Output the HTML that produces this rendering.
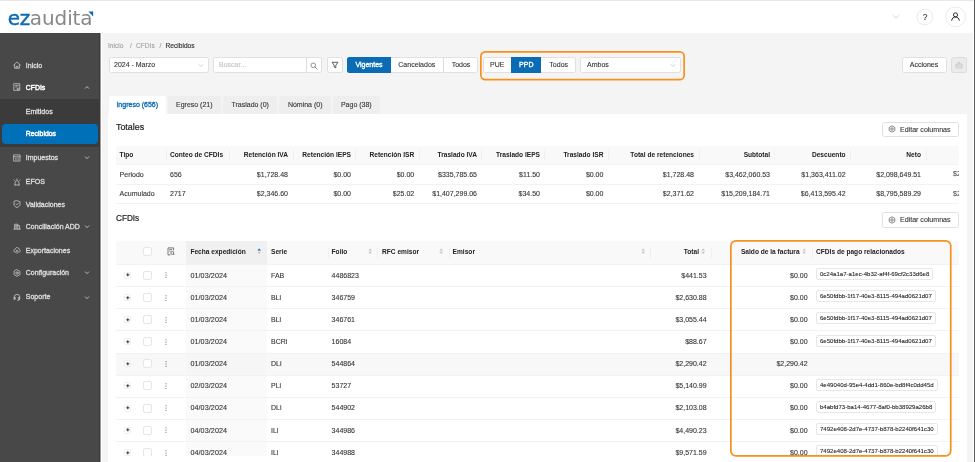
<!DOCTYPE html><html lang="es"><head><meta charset="utf-8"><title>ezaudita - CFDIs Recibidos</title><style>
*{box-sizing:border-box;margin:0;padding:0}
html,body{width:975px;height:462px;overflow:hidden;background:#fff}
body{position:relative;font-family:"Liberation Sans",sans-serif;-webkit-font-smoothing:antialiased}
div,svg{position:absolute}
.t{white-space:nowrap}
#root{left:0;top:0;width:975px;height:462px;will-change:transform}
.tag{height:12px;padding:0 3.2px 0 3.4px;border:1px solid #e7e7e7;border-radius:2px;background:#fff;font-size:6.06px;line-height:10.2px;color:#222;-webkit-text-stroke:0.08px #222}
.btn{background:#fff;border:1px solid #e0e0e0;border-radius:2.5px}
svg{overflow:visible}
</style></head><body><div id="root">
<div style="left:102px;top:33px;width:871px;height:429px;background:#f4f4f4"></div>
<div style="left:0px;top:0px;width:975px;height:1px;background:#ebe6e7"></div>
<div style="left:974px;top:0px;width:1px;height:462px;background:#5a5a5a"></div>
<div class="t" style="left:7.8px;top:5.2px;font-family:'DejaVu Sans','Liberation Sans',sans-serif;font-size:20px;line-height:26px;letter-spacing:-0.1px;color:#85878a"><span style="color:#0a6cb4;-webkit-text-stroke:0.45px #0a6cb4;letter-spacing:-0.4px">ez</span><span>audita</span></div>
<svg style="left:88px;top:11px" width="6" height="6" viewBox="0 0 6 6"><path d="M0.3 0.6 L5.2 0.6 L5.2 5.4 Z" fill="#0a6cb4"/></svg>
<svg style="left:892px;top:14px" width="8" height="6" viewBox="0 0 8 6"><path d="M1.2 1.3 L4 4.2 L6.8 1.3" fill="none" stroke="#c9c9c9" stroke-width="0.8"/></svg>
<svg style="left:915px;top:7px" width="20" height="20" viewBox="0 0 20 20"><circle cx="9.8" cy="10" r="7.9" fill="#fff" stroke="#e3e3e3" stroke-width="0.8"/></svg>
<div class="t" style="left:825px;width:200px;text-align:center;top:11.95px;font-size:8.5px;line-height:10px;color:#333;-webkit-text-stroke:0.1px #333;">?</div>
<svg style="left:943px;top:4px" width="26" height="26" viewBox="0 0 26 26"><circle cx="12.5" cy="12.8" r="9.9" fill="#fff" stroke="#e3e3e3" stroke-width="0.8"/></svg>
<svg style="left:951px;top:12px" width="9" height="9" viewBox="0 0 9 9"><circle cx="4.5" cy="2.9" r="2.05" fill="none" stroke="#222" stroke-width="0.95"/><path d="M0.7 8.3 C1 6.2 2.6 5 4.5 5 C6.4 5 8 6.2 8.3 8.3" fill="none" stroke="#222" stroke-width="0.95" stroke-linecap="round"/></svg>
<div style="left:0px;top:33px;width:100px;height:429px;background:#484848"></div>
<div style="left:99px;top:33px;width:1px;height:429px;background:#3a3a3a"></div>
<div style="left:100px;top:33px;width:1px;height:429px;background:#9a9a9a"></div>
<div style="left:0px;top:99px;width:99px;height:47.5px;background:#3b3b3b"></div>
<div style="left:2px;top:124px;width:96px;height:20px;background:#0070b8;border-radius:4px"></div>
<div class="t" style="left:25.8px;top:60.6px;font-size:7px;line-height:10px;color:#dcdcdc;-webkit-text-stroke:0.32px #dcdcdc;">Inicio</div>
<svg style="left:13px;top:61px" width="8" height="8" viewBox="0 0 8 8" fill="none" stroke="#d2d2d2" stroke-width="0.72" stroke-linejoin="round" stroke-linecap="round"><path d="M0.6 4.2 L4 0.9 L7.4 4.2 M1.6 3.6 V7.2 H6.4 V3.6 M3.1 7.2 V5.4 H4.9 V7.2" /></svg>
<div class="t" style="left:25.8px;top:82.65px;font-size:6.9px;line-height:10px;color:#fff;-webkit-text-stroke:0.32px #fff;-webkit-text-stroke:0.42px #fff;">CFDIs</div>
<svg style="left:13px;top:83.3px" width="8" height="8" viewBox="0 0 8 8" fill="none" stroke="#d2d2d2" stroke-width="0.72" stroke-linejoin="round" stroke-linecap="round"><path d="M1.2 0.7 H6.8 V7.3 H1.2 Z M2.6 2.4 H5.4 M2.6 3.9 H4 M4.2 5.9 a1 1 0 1 0 2 0 a1 1 0 1 0 -2 0" /></svg>
<svg style="left:83.5px;top:85.1px" width="6" height="5" viewBox="0 0 6 5" fill="none" stroke="#d8d8d8" stroke-width="0.8"><path d='M1 3.6 L3 1.6 L5 3.6'/></svg>
<div class="t" style="left:25.8px;top:107px;font-size:7px;line-height:10px;color:#dcdcdc;-webkit-text-stroke:0.32px #dcdcdc;">Emitidos</div>
<div class="t" style="left:25.8px;top:129.3px;font-size:6.9px;line-height:10px;color:#fff;-webkit-text-stroke:0.32px #fff;-webkit-text-stroke:0.42px #fff;">Recibidos</div>
<div class="t" style="left:25.8px;top:153.2px;font-size:7px;line-height:10px;color:#dcdcdc;-webkit-text-stroke:0.32px #dcdcdc;">Impuestos</div>
<svg style="left:13px;top:153.6px" width="8" height="8" viewBox="0 0 8 8" fill="none" stroke="#d2d2d2" stroke-width="0.72" stroke-linejoin="round" stroke-linecap="round"><path d="M1 0.9 H7 V7.1 H1 Z M1 2.8 H7 M2.6 4.3 H3.2 M4.8 4.3 H5.4 M2.6 5.8 H3.2 M4.8 5.8 H5.4" /></svg>
<svg style="left:83.5px;top:155.4px" width="6" height="5" viewBox="0 0 6 5" fill="none" stroke="#d8d8d8" stroke-width="0.8"><path d='M1 1.6 L3 3.6 L5 1.6'/></svg>
<div class="t" style="left:25.8px;top:177.35px;font-size:7px;line-height:10px;color:#dcdcdc;-webkit-text-stroke:0.32px #dcdcdc;">EFOS</div>
<svg style="left:13px;top:178px" width="8" height="8" viewBox="0 0 8 8" fill="none" stroke="#d2d2d2" stroke-width="0.72" stroke-linejoin="round" stroke-linecap="round"><path d="M1.6 7 H6.4 M2.1 7 V4.6 a1.9 1.9 0 0 1 3.8 0 V7 M4 1.6 V0.8 M1.4 2.4 L0.9 1.9 M6.6 2.4 L7.1 1.9" /></svg>
<div class="t" style="left:25.8px;top:200px;font-size:7px;line-height:10px;color:#dcdcdc;-webkit-text-stroke:0.32px #dcdcdc;">Validaciones</div>
<svg style="left:13px;top:200.4px" width="8" height="8" viewBox="0 0 8 8" fill="none" stroke="#d2d2d2" stroke-width="0.72" stroke-linejoin="round" stroke-linecap="round"><path d="M4 0.7 L7 1.7 V4.3 C7 5.9 5.6 6.9 4 7.5 C2.4 6.9 1 5.9 1 4.3 V1.7 Z M2.8 4 L3.7 4.9 L5.3 3.2" /></svg>
<div class="t" style="left:25.8px;top:221.9px;font-size:7px;line-height:10px;color:#dcdcdc;-webkit-text-stroke:0.32px #dcdcdc;">Conciliación ADD</div>
<svg style="left:13px;top:222.3px" width="8" height="8" viewBox="0 0 8 8" fill="none" stroke="#d2d2d2" stroke-width="0.72" stroke-linejoin="round" stroke-linecap="round"><path d="M0.8 7.1 H7.2 M1.6 7.1 V2.2 H4.8 V7.1 M4.8 3.6 H6.6 V7.1 M2.6 3.4 H3.8 M2.6 4.7 H3.8 M2.6 6 H3.8" /></svg>
<svg style="left:83.5px;top:224.1px" width="6" height="5" viewBox="0 0 6 5" fill="none" stroke="#d8d8d8" stroke-width="0.8"><path d='M1 1.6 L3 3.6 L5 1.6'/></svg>
<div class="t" style="left:25.8px;top:245.9px;font-size:7px;line-height:10px;color:#dcdcdc;-webkit-text-stroke:0.32px #dcdcdc;">Exportaciones</div>
<svg style="left:13px;top:246.3px" width="8" height="8" viewBox="0 0 8 8" fill="none" stroke="#d2d2d2" stroke-width="0.72" stroke-linejoin="round" stroke-linecap="round"><path d="M2.3 6.3 C0.2 6.3 0.3 3.6 2.1 3.5 C2.2 0.9 6 0.9 6.1 3.5 C7.8 3.7 7.8 6.3 5.8 6.3 M4 7.4 V4.4 M2.9 5.4 L4 4.3 L5.1 5.4" /></svg>
<div class="t" style="left:25.8px;top:268.2px;font-size:7px;line-height:10px;color:#dcdcdc;-webkit-text-stroke:0.32px #dcdcdc;">Configuración</div>
<svg style="left:13px;top:268.6px" width="8" height="8" viewBox="0 0 8 8" fill="none" stroke="#d2d2d2" stroke-width="0.72" stroke-linejoin="round" stroke-linecap="round"><path d="M4 0.7 L6.9 2.35 V5.65 L4 7.3 L1.1 5.65 V2.35 Z" /><circle cx="4" cy="4" r="1.2"/></svg>
<svg style="left:83.5px;top:270.4px" width="6" height="5" viewBox="0 0 6 5" fill="none" stroke="#d8d8d8" stroke-width="0.8"><path d='M1 1.6 L3 3.6 L5 1.6'/></svg>
<div class="t" style="left:25.8px;top:292.3px;font-size:7px;line-height:10px;color:#dcdcdc;-webkit-text-stroke:0.32px #dcdcdc;">Soporte</div>
<svg style="left:13px;top:292.7px" width="8" height="8" viewBox="0 0 8 8" fill="none" stroke="#d2d2d2" stroke-width="0.72" stroke-linejoin="round" stroke-linecap="round"><path d="M1.3 5.2 V4 a2.7 2.7 0 0 1 5.4 0 V5.2 M1.3 4.4 H2.3 V6.4 H1.3 Z M5.7 4.4 H6.7 V6.4 H5.7 Z M6.7 6.2 C6.7 7.2 5.6 7.4 4.6 7.4" /></svg>
<svg style="left:83.5px;top:294.5px" width="6" height="5" viewBox="0 0 6 5" fill="none" stroke="#d8d8d8" stroke-width="0.8"><path d='M1 1.6 L3 3.6 L5 1.6'/></svg>
<div class="t" style="left:108px;top:41.2px;font-size:6.6px;line-height:10px;color:#a0a0a0;-webkit-text-stroke:0.1px #a0a0a0;">Inicio</div>
<div class="t" style="left:130px;top:40.95px;font-size:6.6px;line-height:10px;color:#a0a0a0;-webkit-text-stroke:0.1px #a0a0a0;">/</div>
<div class="t" style="left:136px;top:40.95px;font-size:6.6px;line-height:10px;color:#a0a0a0;-webkit-text-stroke:0.1px #a0a0a0;">CFDIs</div>
<div class="t" style="left:159.5px;top:40.95px;font-size:6.6px;line-height:10px;color:#a0a0a0;-webkit-text-stroke:0.1px #a0a0a0;">/</div>
<div class="t" style="left:165.6px;top:41.2px;font-size:6.6px;line-height:10px;color:#333;-webkit-text-stroke:0.1px #333;-webkit-text-stroke:0.15px #333;">Recibidos</div>
<div class="btn" style="left:108.5px;top:57.3px;width:100px;height:15.4px;"></div>
<div class="t" style="left:114px;top:59.75px;font-size:7px;line-height:10px;color:#333;-webkit-text-stroke:0.1px #333;">2024 - Marzo</div>
<svg style="left:197.5px;top:62.8px" width="6" height="5" viewBox="0 0 6 5" fill="none" stroke="#c4c4c4" stroke-width="0.7"><path d="M0.8 1.2 L3 3.5 L5.2 1.2"/></svg>
<div class="btn" style="left:213.4px;top:57.3px;width:108.6px;height:15.4px;"></div>
<div style="left:306.2px;top:57.3px;width:0.7px;height:15.4px;background:#dcdcdc"></div>
<div class="t" style="left:219px;top:60px;font-size:7px;line-height:10px;color:#c2c2c2;-webkit-text-stroke:0.1px #c2c2c2;">Buscar...</div>
<svg style="left:310.3px;top:61.5px" width="8" height="8" viewBox="0 0 8 8" fill="none" stroke="#777" stroke-width="0.8"><circle cx="3.3" cy="3.3" r="2.3"/><path d="M5 5 L7.2 7.2" stroke-linecap="round"/></svg>
<div class="btn" style="left:327px;top:57.3px;width:16px;height:15.4px;"></div>
<svg style="left:331px;top:61.2px" width="8" height="8" viewBox="0 0 8 8" fill="none" stroke="#333" stroke-width="0.8" stroke-linejoin="round"><path d="M1.1 1.3 H6.9 L4.8 4.3 V6.9 L3.2 6.1 V4.3 Z"/></svg>
<div class="btn" style="left:347px;top:57.3px;width:131px;height:15.4px;"></div>
<div style="left:347px;top:57.3px;width:44.2px;height:15.4px;background:#0a6cb4;border-radius:2.5px 0 0 2.5px"></div>
<div class="t" style="left:269px;width:200px;text-align:center;top:60px;font-size:7px;line-height:10px;color:#fff;-webkit-text-stroke:0.32px #fff;">Vigentes</div>
<div class="t" style="left:316.8px;width:200px;text-align:center;top:60px;font-size:7px;line-height:10px;color:#333;-webkit-text-stroke:0.1px #333;">Cancelados</div>
<div style="left:443.2px;top:57.3px;width:0.7px;height:15.4px;background:#dcdcdc"></div>
<div class="t" style="left:361px;width:200px;text-align:center;top:60px;font-size:7px;line-height:10px;color:#333;-webkit-text-stroke:0.1px #333;">Todos</div>
<svg style="left:479.6px;top:50.6px" width="205" height="29.5" viewBox="0 0 205 29.5"><rect x="0.85" y="0.85" width="203.3" height="27.8" rx="4.5" ry="4.5" fill="none" stroke="#f7911d" stroke-width="1.7"/></svg>
<div class="btn" style="left:483px;top:57.3px;width:93px;height:15.4px;"></div>
<div style="left:511px;top:57.3px;width:30px;height:15.4px;background:#0a6cb4"></div>
<div class="t" style="left:397.3px;width:200px;text-align:center;top:59.75px;font-size:7px;line-height:10px;color:#333;-webkit-text-stroke:0.1px #333;">PUE</div>
<div class="t" style="left:426.3px;width:200px;text-align:center;top:59.75px;font-size:7px;line-height:10px;color:#fff;-webkit-text-stroke:0.32px #fff;">PPD</div>
<div class="t" style="left:458.7px;width:200px;text-align:center;top:60px;font-size:7px;line-height:10px;color:#333;-webkit-text-stroke:0.1px #333;">Todos</div>
<div class="btn" style="left:580.4px;top:57.3px;width:100.6px;height:15.4px;"></div>
<div class="t" style="left:587px;top:60px;font-size:7px;line-height:10px;color:#333;-webkit-text-stroke:0.1px #333;">Ambos</div>
<svg style="left:670px;top:62.8px" width="6" height="5" viewBox="0 0 6 5" fill="none" stroke="#c4c4c4" stroke-width="0.7"><path d="M0.8 1.2 L3 3.5 L5.2 1.2"/></svg>
<div class="btn" style="left:901.6px;top:56.8px;width:45px;height:15.8px;"></div>
<div class="t" style="left:824px;width:200px;text-align:center;top:59.6px;font-size:7px;line-height:10px;color:#333;-webkit-text-stroke:0.1px #333;-webkit-text-stroke:0.12px #333;">Acciones</div>
<div style="left:951px;top:57px;width:16px;height:15.6px;background:#ebebeb;border:0.7px solid #dcdcdc;border-radius:2.5px"></div>
<svg style="left:955.2px;top:61px" width="8" height="8" viewBox="0 0 8 8" fill="none" stroke="#c0c0c0" stroke-width="0.7"><path d="M1 3.2 H7 V7 H1 Z M1 5 H7 M3 3.2 V1.8 H5 V3.2 M4 0.8 V1.8"/></svg>
<div style="left:108.5px;top:96px;width:57.5px;height:18px;background:#fff;border-radius:2.5px 2.5px 0 0"></div>
<div class="t" style="left:37.25px;width:200px;text-align:center;top:99.75px;font-size:7px;line-height:10px;color:#0a6cb4;-webkit-text-stroke:0.32px #0a6cb4;">Ingreso (656)</div>
<div style="left:168px;top:96px;width:52.6px;height:18px;background:#eeeeee;border-radius:2.5px 2.5px 0 0"></div>
<div class="t" style="left:94.3px;width:200px;text-align:center;top:99.75px;font-size:7px;line-height:10px;color:#333;-webkit-text-stroke:0.1px #333;">Egreso (21)</div>
<div style="left:223px;top:96px;width:54.4px;height:18px;background:#eeeeee;border-radius:2.5px 2.5px 0 0"></div>
<div class="t" style="left:150.2px;width:200px;text-align:center;top:100px;font-size:7px;line-height:10px;color:#333;-webkit-text-stroke:0.1px #333;">Traslado (0)</div>
<div style="left:279.4px;top:96px;width:51.6px;height:18px;background:#eeeeee;border-radius:2.5px 2.5px 0 0"></div>
<div class="t" style="left:205.2px;width:200px;text-align:center;top:100px;font-size:7px;line-height:10px;color:#333;-webkit-text-stroke:0.1px #333;">Nómina (0)</div>
<div style="left:332.6px;top:96px;width:47.4px;height:18px;background:#eeeeee;border-radius:2.5px 2.5px 0 0"></div>
<div class="t" style="left:256.3px;width:200px;text-align:center;top:99.75px;font-size:7px;line-height:10px;color:#333;-webkit-text-stroke:0.1px #333;">Pago (38)</div>
<div style="left:108px;top:113.6px;width:859.4px;height:349px;background:#fff"></div>
<div class="t" style="left:116px;top:121.9px;font-size:8.9px;line-height:10px;color:#222;-webkit-text-stroke:0.2px #222;">Totales</div>
<div class="t" style="left:116px;top:214.25px;font-size:8.2px;line-height:10px;color:#222;-webkit-text-stroke:0.2px #222;">CFDIs</div>
<div class="btn" style="left:881.6px;top:121.7px;width:77.4px;height:15.4px;"></div>
<svg style="left:888.4px;top:125.4px" width="8" height="8" viewBox="0 0 8 8" fill="none" stroke="#444" stroke-width="0.65" stroke-linejoin="round"><path d="M4 0.8 L6.8 2.4 V5.6 L4 7.2 L1.2 5.6 V2.4 Z"/><circle cx="4" cy="4" r="1.2"/></svg>
<div class="t" style="left:900px;top:124.5px;font-size:7.05px;line-height:10px;color:#333;-webkit-text-stroke:0.1px #333;">Editar columnas</div>
<div class="btn" style="left:881.6px;top:212.2px;width:77.4px;height:15.4px;"></div>
<svg style="left:888.4px;top:215.9px" width="8" height="8" viewBox="0 0 8 8" fill="none" stroke="#444" stroke-width="0.65" stroke-linejoin="round"><path d="M4 0.8 L6.8 2.4 V5.6 L4 7.2 L1.2 5.6 V2.4 Z"/><circle cx="4" cy="4" r="1.2"/></svg>
<div class="t" style="left:900px;top:215px;font-size:7.05px;line-height:10px;color:#333;-webkit-text-stroke:0.1px #333;">Editar columnas</div>
<div style="left:115.6px;top:145.6px;width:843.4px;height:18.8px;background:#f9f9f9;border-radius:3px 3px 0 0"></div>
<div style="left:165.6px;top:150px;width:1px;height:10px;background:#f0f0f0"></div>
<div style="left:229px;top:150px;width:1px;height:10px;background:#f0f0f0"></div>
<div style="left:293px;top:150px;width:1px;height:10px;background:#f0f0f0"></div>
<div style="left:355.4px;top:150px;width:1px;height:10px;background:#f0f0f0"></div>
<div style="left:418.6px;top:150px;width:1px;height:10px;background:#f0f0f0"></div>
<div style="left:481.4px;top:150px;width:1px;height:10px;background:#f0f0f0"></div>
<div style="left:544.4px;top:150px;width:1px;height:10px;background:#f0f0f0"></div>
<div style="left:608px;top:150px;width:1px;height:10px;background:#f0f0f0"></div>
<div style="left:698.6px;top:150px;width:1px;height:10px;background:#f0f0f0"></div>
<div style="left:774.4px;top:150px;width:1px;height:10px;background:#f0f0f0"></div>
<div style="left:850px;top:150px;width:1px;height:10px;background:#f0f0f0"></div>
<div style="left:925.6px;top:150px;width:1px;height:10px;background:#f0f0f0"></div>
<div style="left:115.6px;top:164px;width:843.4px;height:1px;background:#f2f2f2"></div>
<div style="left:115.6px;top:184px;width:843.4px;height:1px;background:#f2f2f2"></div>
<div style="left:115.6px;top:203px;width:843.4px;height:1px;background:#f2f2f2"></div>
<div class="t" style="left:119.6px;top:149.9px;font-size:6.6px;line-height:10px;color:#222;font-weight:700;">Tipo</div>
<div class="t" style="left:170px;top:149.9px;font-size:6.6px;line-height:10px;color:#222;font-weight:700;">Conteo de CFDIs</div>
<div class="t" style="left:119.6px;top:169.9px;font-size:7px;line-height:10px;color:#333;-webkit-text-stroke:0.1px #333;">Periodo</div>
<div class="t" style="left:170px;top:169.65px;font-size:7px;line-height:10px;color:#333;-webkit-text-stroke:0.1px #333;">656</div>
<div class="t" style="left:119.6px;top:189.3px;font-size:7px;line-height:10px;color:#333;-webkit-text-stroke:0.1px #333;">Acumulado</div>
<div class="t" style="left:170px;top:189.05px;font-size:7px;line-height:10px;color:#333;-webkit-text-stroke:0.1px #333;">2717</div>
<div class="t" style="right:687px;top:149.9px;font-size:6.6px;line-height:10px;color:#222;font-weight:700;">Retención IVA</div>
<div class="t" style="right:687px;top:169.65px;font-size:7px;line-height:10px;color:#333;-webkit-text-stroke:0.1px #333;">$1,728.48</div>
<div class="t" style="right:687px;top:189.05px;font-size:7px;line-height:10px;color:#333;-webkit-text-stroke:0.1px #333;">$2,346.60</div>
<div class="t" style="right:624px;top:149.9px;font-size:6.6px;line-height:10px;color:#222;font-weight:700;">Retención IEPS</div>
<div class="t" style="right:624px;top:169.65px;font-size:7px;line-height:10px;color:#333;-webkit-text-stroke:0.1px #333;">$0.00</div>
<div class="t" style="right:624px;top:189.05px;font-size:7px;line-height:10px;color:#333;-webkit-text-stroke:0.1px #333;">$0.00</div>
<div class="t" style="right:560.8px;top:149.9px;font-size:6.6px;line-height:10px;color:#222;font-weight:700;">Retención ISR</div>
<div class="t" style="right:560.8px;top:169.65px;font-size:7px;line-height:10px;color:#333;-webkit-text-stroke:0.1px #333;">$0.00</div>
<div class="t" style="right:560.8px;top:189.05px;font-size:7px;line-height:10px;color:#333;-webkit-text-stroke:0.1px #333;">$25.02</div>
<div class="t" style="right:498px;top:149.9px;font-size:6.6px;line-height:10px;color:#222;font-weight:700;">Traslado IVA</div>
<div class="t" style="right:498px;top:169.65px;font-size:7px;line-height:10px;color:#333;-webkit-text-stroke:0.1px #333;">$335,785.65</div>
<div class="t" style="right:498px;top:189.05px;font-size:7px;line-height:10px;color:#333;-webkit-text-stroke:0.1px #333;">$1,407,299.06</div>
<div class="t" style="right:435px;top:149.9px;font-size:6.6px;line-height:10px;color:#222;font-weight:700;">Traslado IEPS</div>
<div class="t" style="right:435px;top:169.65px;font-size:7px;line-height:10px;color:#333;-webkit-text-stroke:0.1px #333;">$11.50</div>
<div class="t" style="right:435px;top:189.05px;font-size:7px;line-height:10px;color:#333;-webkit-text-stroke:0.1px #333;">$34.50</div>
<div class="t" style="right:371.6px;top:149.9px;font-size:6.6px;line-height:10px;color:#222;font-weight:700;">Traslado ISR</div>
<div class="t" style="right:371.6px;top:169.65px;font-size:7px;line-height:10px;color:#333;-webkit-text-stroke:0.1px #333;">$0.00</div>
<div class="t" style="right:371.6px;top:189.05px;font-size:7px;line-height:10px;color:#333;-webkit-text-stroke:0.1px #333;">$0.00</div>
<div class="t" style="right:281px;top:149.9px;font-size:6.6px;line-height:10px;color:#222;font-weight:700;">Total de retenciones</div>
<div class="t" style="right:281px;top:169.65px;font-size:7px;line-height:10px;color:#333;-webkit-text-stroke:0.1px #333;">$1,728.48</div>
<div class="t" style="right:281px;top:189.05px;font-size:7px;line-height:10px;color:#333;-webkit-text-stroke:0.1px #333;">$2,371.62</div>
<div class="t" style="right:205px;top:149.9px;font-size:6.6px;line-height:10px;color:#222;font-weight:700;">Subtotal</div>
<div class="t" style="right:205px;top:169.65px;font-size:7px;line-height:10px;color:#333;-webkit-text-stroke:0.1px #333;">$3,462,060.53</div>
<div class="t" style="right:205px;top:189.05px;font-size:7px;line-height:10px;color:#333;-webkit-text-stroke:0.1px #333;">$15,209,184.71</div>
<div class="t" style="right:129.4px;top:149.9px;font-size:6.6px;line-height:10px;color:#222;font-weight:700;">Descuento</div>
<div class="t" style="right:129.4px;top:169.65px;font-size:7px;line-height:10px;color:#333;-webkit-text-stroke:0.1px #333;">$1,363,411.02</div>
<div class="t" style="right:129.4px;top:189.05px;font-size:7px;line-height:10px;color:#333;-webkit-text-stroke:0.1px #333;">$6,413,595.42</div>
<div class="t" style="right:54px;top:149.9px;font-size:6.6px;line-height:10px;color:#222;font-weight:700;">Neto</div>
<div class="t" style="right:54px;top:169.65px;font-size:7px;line-height:10px;color:#333;-webkit-text-stroke:0.1px #333;">$2,098,649.51</div>
<div class="t" style="right:54px;top:189.05px;font-size:7px;line-height:10px;color:#333;-webkit-text-stroke:0.1px #333;">$8,795,589.29</div>
<div style="left:940px;top:165px;width:19px;height:38px;overflow:hidden">
<div class="t" style="left:13px;top:4.3px;font-size:7px;line-height:10px;color:#333">$2,098,649.51</div>
<div class="t" style="left:13px;top:23.7px;font-size:7px;line-height:10px;color:#333">$2,371,620.11</div>
</div>
<div style="left:115.6px;top:241px;width:843.4px;height:23.45px;background:#f9f9f9;border-radius:3px 3px 0 0"></div>
<div style="left:186.4px;top:241px;width:80.6px;height:23.45px;background:#f0f0f0"></div>
<div style="left:186.4px;top:264.45px;width:80.6px;height:197.55px;background:#fafafa"></div>
<div style="left:115.6px;top:353.05px;width:843.4px;height:22.15px;background:#f8f8f8"></div>
<div style="left:186.4px;top:353.05px;width:80.6px;height:22.15px;background:#f6f6f6"></div>
<div style="left:115.6px;top:264px;width:843.4px;height:1px;background:#f2f2f2"></div>
<div style="left:115.6px;top:286px;width:843.4px;height:1px;background:#f2f2f2"></div>
<div style="left:115.6px;top:308px;width:843.4px;height:1px;background:#f2f2f2"></div>
<div style="left:115.6px;top:330px;width:843.4px;height:1px;background:#f2f2f2"></div>
<div style="left:115.6px;top:353px;width:843.4px;height:1px;background:#f2f2f2"></div>
<div style="left:115.6px;top:375px;width:843.4px;height:1px;background:#f2f2f2"></div>
<div style="left:115.6px;top:397px;width:843.4px;height:1px;background:#f2f2f2"></div>
<div style="left:115.6px;top:419px;width:843.4px;height:1px;background:#f2f2f2"></div>
<div style="left:115.6px;top:441px;width:843.4px;height:1px;background:#f2f2f2"></div>
<div style="left:327.6px;top:247.5px;width:1px;height:10.5px;background:#efefef"></div>
<div style="left:377.4px;top:247.5px;width:1px;height:10.5px;background:#efefef"></div>
<div style="left:448.6px;top:247.5px;width:1px;height:10.5px;background:#efefef"></div>
<div style="left:649.6px;top:247.5px;width:1px;height:10.5px;background:#efefef"></div>
<div style="left:710.6px;top:247.5px;width:1px;height:10.5px;background:#efefef"></div>
<div style="left:811.6px;top:247.5px;width:1px;height:10.5px;background:#efefef"></div>
<div style="left:143.2px;top:246.6px;width:9px;height:9px;border:1px solid #e6e6e6;border-radius:2px;background:#fff"></div>
<svg style="left:167.4px;top:247px" width="8" height="9" viewBox="0 0 8 9" fill="none" stroke="#444" stroke-width="0.7" stroke-linejoin="round"><path d="M6.6 3.4 V0.9 H1 V7.9 H3.4 M2.4 2.6 H5.2 M2.4 4.1 H3.6"/><circle cx="5.3" cy="5.9" r="1.5"/><path d="M6.4 7 L7.4 8"/></svg>
<div class="t" style="left:190.4px;top:247px;font-size:6.6px;line-height:10px;color:#222;font-weight:700;">Fecha expedición</div>
<svg style="left:257.4px;top:248.2px" width="4.4" height="6.4" viewBox="0 0 4.4 6.4"><path d="M0.3 2.6 L2.2 0.4 L4.1 2.6 Z" fill="#0a6cb4"/><path d="M0.3 3.8 L2.2 6 L4.1 3.8 Z" fill="#c4c4c4"/></svg>
<div class="t" style="left:271px;top:247px;font-size:6.6px;line-height:10px;color:#222;font-weight:700;">Serie</div>
<div class="t" style="left:331.6px;top:247px;font-size:6.6px;line-height:10px;color:#222;font-weight:700;">Folio</div>
<svg style="left:368.4px;top:248.2px" width="4.4" height="6.4" viewBox="0 0 4.4 6.4"><path d="M0.3 2.6 L2.2 0.4 L4.1 2.6 Z" fill="#c4c4c4"/><path d="M0.3 3.8 L2.2 6 L4.1 3.8 Z" fill="#c4c4c4"/></svg>
<div class="t" style="left:382px;top:247px;font-size:6.6px;line-height:10px;color:#222;font-weight:700;">RFC emisor</div>
<svg style="left:439.2px;top:248.2px" width="4.4" height="6.4" viewBox="0 0 4.4 6.4"><path d="M0.3 2.6 L2.2 0.4 L4.1 2.6 Z" fill="#c4c4c4"/><path d="M0.3 3.8 L2.2 6 L4.1 3.8 Z" fill="#c4c4c4"/></svg>
<div class="t" style="left:452.6px;top:247px;font-size:6.6px;line-height:10px;color:#222;font-weight:700;">Emisor</div>
<svg style="left:640.8px;top:248.2px" width="4.4" height="6.4" viewBox="0 0 4.4 6.4"><path d="M0.3 2.6 L2.2 0.4 L4.1 2.6 Z" fill="#c4c4c4"/><path d="M0.3 3.8 L2.2 6 L4.1 3.8 Z" fill="#c4c4c4"/></svg>
<div class="t" style="right:276px;top:247px;font-size:6.6px;line-height:10px;color:#222;font-weight:700;">Total</div>
<svg style="left:701.4px;top:248.2px" width="4.4" height="6.4" viewBox="0 0 4.4 6.4"><path d="M0.3 2.6 L2.2 0.4 L4.1 2.6 Z" fill="#c4c4c4"/><path d="M0.3 3.8 L2.2 6 L4.1 3.8 Z" fill="#c4c4c4"/></svg>
<div class="t" style="right:175.4px;top:247px;font-size:6.6px;line-height:10px;color:#222;font-weight:700;">Saldo de la factura</div>
<svg style="left:802.2px;top:248.2px" width="4.4" height="6.4" viewBox="0 0 4.4 6.4"><path d="M0.3 2.6 L2.2 0.4 L4.1 2.6 Z" fill="#c4c4c4"/><path d="M0.3 3.8 L2.2 6 L4.1 3.8 Z" fill="#c4c4c4"/></svg>
<div class="t" style="left:816px;top:247px;font-size:6.6px;line-height:10px;color:#222;font-weight:700;">CFDIs de pago relacionados</div>
<div style="left:124px;top:271.725px;width:7px;height:7px;border:1px solid #eeeeee;border-radius:1.6px;background:#fff"></div>
<svg style="left:125.7px;top:273.425px" width="3.6" height="3.6" viewBox="0 0 3.6 3.6" stroke="#222" stroke-width="0.85"><path d="M0.2 1.8 H3.4 M1.8 0.2 V3.4"/></svg>
<div style="left:143.2px;top:270.625px;width:9px;height:9px;border:1px solid #e6e6e6;border-radius:2px;background:#fff"></div>
<svg style="left:165.4px;top:272.425px" width="2" height="6" viewBox="0 0 2 6" fill="#555"><circle cx="1" cy="0.8" r="0.55"/><circle cx="1" cy="3" r="0.55"/><circle cx="1" cy="5.2" r="0.55"/></svg>
<div class="t" style="left:190.4px;top:270.575px;font-size:7.2px;line-height:10px;color:#333;-webkit-text-stroke:0.1px #333;letter-spacing:0.08px;">01/03/2024</div>
<div class="t" style="left:271px;top:270.575px;font-size:7px;line-height:10px;color:#333;-webkit-text-stroke:0.1px #333;">FAB</div>
<div class="t" style="left:331.6px;top:270.575px;font-size:7px;line-height:10px;color:#333;-webkit-text-stroke:0.1px #333;">4486823</div>
<div class="t" style="right:268.4px;top:270.575px;font-size:7px;line-height:10px;color:#333;-webkit-text-stroke:0.1px #333;">$441.53</div>
<div class="t" style="right:167.4px;top:270.575px;font-size:7px;line-height:10px;color:#333;-webkit-text-stroke:0.1px #333;">$0.00</div>
<div class="t tag" style="left:815.6px;top:268px">0c24a1a7-a1ec-4b32-af4f-69cf2c33d6e8</div>
<div style="left:124px;top:293.875px;width:7px;height:7px;border:1px solid #eeeeee;border-radius:1.6px;background:#fff"></div>
<svg style="left:125.7px;top:295.575px" width="3.6" height="3.6" viewBox="0 0 3.6 3.6" stroke="#222" stroke-width="0.85"><path d="M0.2 1.8 H3.4 M1.8 0.2 V3.4"/></svg>
<div style="left:143.2px;top:292.775px;width:9px;height:9px;border:1px solid #e6e6e6;border-radius:2px;background:#fff"></div>
<svg style="left:165.4px;top:294.575px" width="2" height="6" viewBox="0 0 2 6" fill="#555"><circle cx="1" cy="0.8" r="0.55"/><circle cx="1" cy="3" r="0.55"/><circle cx="1" cy="5.2" r="0.55"/></svg>
<div class="t" style="left:190.4px;top:292.725px;font-size:7.2px;line-height:10px;color:#333;-webkit-text-stroke:0.1px #333;letter-spacing:0.08px;">01/03/2024</div>
<div class="t" style="left:271px;top:292.725px;font-size:7px;line-height:10px;color:#333;-webkit-text-stroke:0.1px #333;">BLi</div>
<div class="t" style="left:331.6px;top:292.725px;font-size:7px;line-height:10px;color:#333;-webkit-text-stroke:0.1px #333;">346759</div>
<div class="t" style="right:268.4px;top:292.725px;font-size:7px;line-height:10px;color:#333;-webkit-text-stroke:0.1px #333;">$2,630.88</div>
<div class="t" style="right:167.4px;top:292.725px;font-size:7px;line-height:10px;color:#333;-webkit-text-stroke:0.1px #333;">$0.00</div>
<div class="t tag" style="left:815.6px;top:290px">6e50fdbb-1f17-40e3-8115-494ad0621d07</div>
<div style="left:124px;top:316.025px;width:7px;height:7px;border:1px solid #eeeeee;border-radius:1.6px;background:#fff"></div>
<svg style="left:125.7px;top:317.725px" width="3.6" height="3.6" viewBox="0 0 3.6 3.6" stroke="#222" stroke-width="0.85"><path d="M0.2 1.8 H3.4 M1.8 0.2 V3.4"/></svg>
<div style="left:143.2px;top:314.925px;width:9px;height:9px;border:1px solid #e6e6e6;border-radius:2px;background:#fff"></div>
<svg style="left:165.4px;top:316.725px" width="2" height="6" viewBox="0 0 2 6" fill="#555"><circle cx="1" cy="0.8" r="0.55"/><circle cx="1" cy="3" r="0.55"/><circle cx="1" cy="5.2" r="0.55"/></svg>
<div class="t" style="left:190.4px;top:314.875px;font-size:7.2px;line-height:10px;color:#333;-webkit-text-stroke:0.1px #333;letter-spacing:0.08px;">01/03/2024</div>
<div class="t" style="left:271px;top:314.875px;font-size:7px;line-height:10px;color:#333;-webkit-text-stroke:0.1px #333;">BLi</div>
<div class="t" style="left:331.6px;top:314.875px;font-size:7px;line-height:10px;color:#333;-webkit-text-stroke:0.1px #333;">346761</div>
<div class="t" style="right:268.4px;top:314.875px;font-size:7px;line-height:10px;color:#333;-webkit-text-stroke:0.1px #333;">$3,055.44</div>
<div class="t" style="right:167.4px;top:314.875px;font-size:7px;line-height:10px;color:#333;-webkit-text-stroke:0.1px #333;">$0.00</div>
<div class="t tag" style="left:815.6px;top:312px">6e50fdbb-1f17-40e3-8115-494ad0621d07</div>
<div style="left:124px;top:338.175px;width:7px;height:7px;border:1px solid #eeeeee;border-radius:1.6px;background:#fff"></div>
<svg style="left:125.7px;top:339.875px" width="3.6" height="3.6" viewBox="0 0 3.6 3.6" stroke="#222" stroke-width="0.85"><path d="M0.2 1.8 H3.4 M1.8 0.2 V3.4"/></svg>
<div style="left:143.2px;top:337.075px;width:9px;height:9px;border:1px solid #e6e6e6;border-radius:2px;background:#fff"></div>
<svg style="left:165.4px;top:338.875px" width="2" height="6" viewBox="0 0 2 6" fill="#555"><circle cx="1" cy="0.8" r="0.55"/><circle cx="1" cy="3" r="0.55"/><circle cx="1" cy="5.2" r="0.55"/></svg>
<div class="t" style="left:190.4px;top:337.025px;font-size:7.2px;line-height:10px;color:#333;-webkit-text-stroke:0.1px #333;letter-spacing:0.08px;">01/03/2024</div>
<div class="t" style="left:271px;top:337.025px;font-size:7px;line-height:10px;color:#333;-webkit-text-stroke:0.1px #333;">BCRi</div>
<div class="t" style="left:331.6px;top:337.025px;font-size:7px;line-height:10px;color:#333;-webkit-text-stroke:0.1px #333;">16084</div>
<div class="t" style="right:268.4px;top:337.025px;font-size:7px;line-height:10px;color:#333;-webkit-text-stroke:0.1px #333;">$88.67</div>
<div class="t" style="right:167.4px;top:337.025px;font-size:7px;line-height:10px;color:#333;-webkit-text-stroke:0.1px #333;">$0.00</div>
<div class="t tag" style="left:815.6px;top:335px">6e50fdbb-1f17-40e3-8115-494ad0621d07</div>
<div style="left:124px;top:360.325px;width:7px;height:7px;border:1px solid #eeeeee;border-radius:1.6px;background:#fff"></div>
<svg style="left:125.7px;top:362.025px" width="3.6" height="3.6" viewBox="0 0 3.6 3.6" stroke="#222" stroke-width="0.85"><path d="M0.2 1.8 H3.4 M1.8 0.2 V3.4"/></svg>
<div style="left:143.2px;top:359.225px;width:9px;height:9px;border:1px solid #e6e6e6;border-radius:2px;background:#fff"></div>
<svg style="left:165.4px;top:361.025px" width="2" height="6" viewBox="0 0 2 6" fill="#555"><circle cx="1" cy="0.8" r="0.55"/><circle cx="1" cy="3" r="0.55"/><circle cx="1" cy="5.2" r="0.55"/></svg>
<div class="t" style="left:190.4px;top:359.175px;font-size:7.2px;line-height:10px;color:#333;-webkit-text-stroke:0.1px #333;letter-spacing:0.08px;">01/03/2024</div>
<div class="t" style="left:271px;top:359.175px;font-size:7px;line-height:10px;color:#333;-webkit-text-stroke:0.1px #333;">DLi</div>
<div class="t" style="left:331.6px;top:359.175px;font-size:7px;line-height:10px;color:#333;-webkit-text-stroke:0.1px #333;">544864</div>
<div class="t" style="right:268.4px;top:359.175px;font-size:7px;line-height:10px;color:#333;-webkit-text-stroke:0.1px #333;">$2,290.42</div>
<div class="t" style="right:167.4px;top:359.175px;font-size:7px;line-height:10px;color:#333;-webkit-text-stroke:0.1px #333;">$2,290.42</div>
<div style="left:124px;top:382.475px;width:7px;height:7px;border:1px solid #eeeeee;border-radius:1.6px;background:#fff"></div>
<svg style="left:125.7px;top:384.175px" width="3.6" height="3.6" viewBox="0 0 3.6 3.6" stroke="#222" stroke-width="0.85"><path d="M0.2 1.8 H3.4 M1.8 0.2 V3.4"/></svg>
<div style="left:143.2px;top:381.375px;width:9px;height:9px;border:1px solid #e6e6e6;border-radius:2px;background:#fff"></div>
<svg style="left:165.4px;top:383.175px" width="2" height="6" viewBox="0 0 2 6" fill="#555"><circle cx="1" cy="0.8" r="0.55"/><circle cx="1" cy="3" r="0.55"/><circle cx="1" cy="5.2" r="0.55"/></svg>
<div class="t" style="left:190.4px;top:381.325px;font-size:7.2px;line-height:10px;color:#333;-webkit-text-stroke:0.1px #333;letter-spacing:0.08px;">02/03/2024</div>
<div class="t" style="left:271px;top:381.325px;font-size:7px;line-height:10px;color:#333;-webkit-text-stroke:0.1px #333;">PLi</div>
<div class="t" style="left:331.6px;top:381.325px;font-size:7px;line-height:10px;color:#333;-webkit-text-stroke:0.1px #333;">53727</div>
<div class="t" style="right:268.4px;top:381.325px;font-size:7px;line-height:10px;color:#333;-webkit-text-stroke:0.1px #333;">$5,140.99</div>
<div class="t" style="right:167.4px;top:381.325px;font-size:7px;line-height:10px;color:#333;-webkit-text-stroke:0.1px #333;">$0.00</div>
<div class="t tag" style="left:815.6px;top:379px">4e49040d-95e4-4dd1-860e-bd8f4c0dd45d</div>
<div style="left:124px;top:404.625px;width:7px;height:7px;border:1px solid #eeeeee;border-radius:1.6px;background:#fff"></div>
<svg style="left:125.7px;top:406.325px" width="3.6" height="3.6" viewBox="0 0 3.6 3.6" stroke="#222" stroke-width="0.85"><path d="M0.2 1.8 H3.4 M1.8 0.2 V3.4"/></svg>
<div style="left:143.2px;top:403.525px;width:9px;height:9px;border:1px solid #e6e6e6;border-radius:2px;background:#fff"></div>
<svg style="left:165.4px;top:405.325px" width="2" height="6" viewBox="0 0 2 6" fill="#555"><circle cx="1" cy="0.8" r="0.55"/><circle cx="1" cy="3" r="0.55"/><circle cx="1" cy="5.2" r="0.55"/></svg>
<div class="t" style="left:190.4px;top:403.475px;font-size:7.2px;line-height:10px;color:#333;-webkit-text-stroke:0.1px #333;letter-spacing:0.08px;">04/03/2024</div>
<div class="t" style="left:271px;top:403.475px;font-size:7px;line-height:10px;color:#333;-webkit-text-stroke:0.1px #333;">DLi</div>
<div class="t" style="left:331.6px;top:403.475px;font-size:7px;line-height:10px;color:#333;-webkit-text-stroke:0.1px #333;">544902</div>
<div class="t" style="right:268.4px;top:403.475px;font-size:7px;line-height:10px;color:#333;-webkit-text-stroke:0.1px #333;">$2,103.08</div>
<div class="t" style="right:167.4px;top:403.475px;font-size:7px;line-height:10px;color:#333;-webkit-text-stroke:0.1px #333;">$0.00</div>
<div class="t tag" style="left:815.6px;top:401px">b4abfd73-ba14-4677-8af0-bb38929a26b8</div>
<div style="left:124px;top:426.775px;width:7px;height:7px;border:1px solid #eeeeee;border-radius:1.6px;background:#fff"></div>
<svg style="left:125.7px;top:428.475px" width="3.6" height="3.6" viewBox="0 0 3.6 3.6" stroke="#222" stroke-width="0.85"><path d="M0.2 1.8 H3.4 M1.8 0.2 V3.4"/></svg>
<div style="left:143.2px;top:425.675px;width:9px;height:9px;border:1px solid #e6e6e6;border-radius:2px;background:#fff"></div>
<svg style="left:165.4px;top:427.475px" width="2" height="6" viewBox="0 0 2 6" fill="#555"><circle cx="1" cy="0.8" r="0.55"/><circle cx="1" cy="3" r="0.55"/><circle cx="1" cy="5.2" r="0.55"/></svg>
<div class="t" style="left:190.4px;top:425.625px;font-size:7.2px;line-height:10px;color:#333;-webkit-text-stroke:0.1px #333;letter-spacing:0.08px;">04/03/2024</div>
<div class="t" style="left:271px;top:425.625px;font-size:7px;line-height:10px;color:#333;-webkit-text-stroke:0.1px #333;">ILi</div>
<div class="t" style="left:331.6px;top:425.625px;font-size:7px;line-height:10px;color:#333;-webkit-text-stroke:0.1px #333;">344986</div>
<div class="t" style="right:268.4px;top:425.625px;font-size:7px;line-height:10px;color:#333;-webkit-text-stroke:0.1px #333;">$4,490.23</div>
<div class="t" style="right:167.4px;top:425.625px;font-size:7px;line-height:10px;color:#333;-webkit-text-stroke:0.1px #333;">$0.00</div>
<div class="t tag" style="left:815.6px;top:423px">7492e408-2d7e-4737-b878-b2240f641c30</div>
<div style="left:124px;top:448.925px;width:7px;height:7px;border:1px solid #eeeeee;border-radius:1.6px;background:#fff"></div>
<svg style="left:125.7px;top:450.625px" width="3.6" height="3.6" viewBox="0 0 3.6 3.6" stroke="#222" stroke-width="0.85"><path d="M0.2 1.8 H3.4 M1.8 0.2 V3.4"/></svg>
<div style="left:143.2px;top:447.825px;width:9px;height:9px;border:1px solid #e6e6e6;border-radius:2px;background:#fff"></div>
<svg style="left:165.4px;top:449.625px" width="2" height="6" viewBox="0 0 2 6" fill="#555"><circle cx="1" cy="0.8" r="0.55"/><circle cx="1" cy="3" r="0.55"/><circle cx="1" cy="5.2" r="0.55"/></svg>
<div class="t" style="left:190.4px;top:447.775px;font-size:7.2px;line-height:10px;color:#333;-webkit-text-stroke:0.1px #333;letter-spacing:0.08px;">04/03/2024</div>
<div class="t" style="left:271px;top:447.775px;font-size:7px;line-height:10px;color:#333;-webkit-text-stroke:0.1px #333;">ILi</div>
<div class="t" style="left:331.6px;top:447.775px;font-size:7px;line-height:10px;color:#333;-webkit-text-stroke:0.1px #333;">344988</div>
<div class="t" style="right:268.4px;top:447.775px;font-size:7px;line-height:10px;color:#333;-webkit-text-stroke:0.1px #333;">$9,571.59</div>
<div class="t" style="right:167.4px;top:447.775px;font-size:7px;line-height:10px;color:#333;-webkit-text-stroke:0.1px #333;">$0.00</div>
<div class="t tag" style="left:815.6px;top:445px">7492e408-2d7e-4737-b878-b2240f641c30</div>
<div style="left:108px;top:456px;width:859.4px;height:6px;background:#fff"></div>
<svg style="left:729.8px;top:240.1px" width="221.6" height="216.7" viewBox="0 0 221.6 216.7"><rect x="0.85" y="0.85" width="219.9" height="215" rx="5" ry="5" fill="none" stroke="#f7911d" stroke-width="1.7"/></svg>
</div></body></html>
